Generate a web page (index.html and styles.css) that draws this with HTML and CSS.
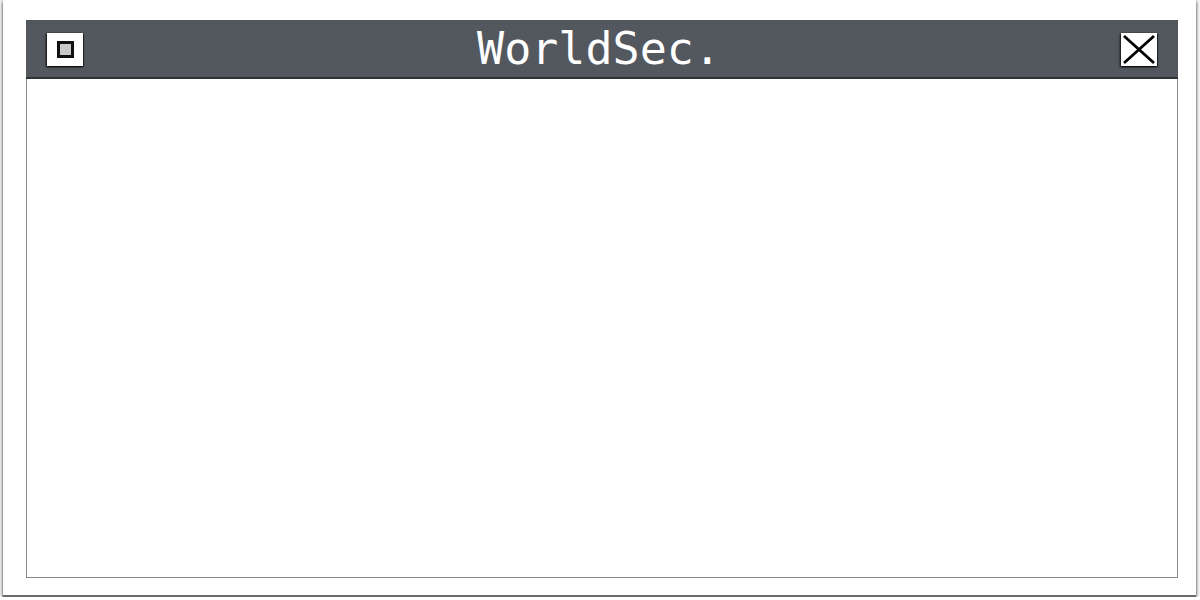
FILE: index.html
```html
<!DOCTYPE html>
<html>
<head>
<meta charset="utf-8">
<link rel="stylesheet" href="styles.css">
</head>
<body>
<div class="frame">
  <div class="window">
    <div class="titlebar">
      <div class="btn btn-min"><span class="inner"></span></div>
      <div class="title">WorldSec.</div>
      <div class="btn btn-close">
        <svg width="36" height="33" viewBox="0 0 36 33"><path d="M3 3 L33 30 M33 3 L3 30" stroke="#000" stroke-width="2.8" fill="none"/></svg>
      </div>
    </div>
    <div class="content"></div>
  </div>
</div>
</body>
</html>
```
FILE: styles.css
```css
html, body { margin: 0; padding: 0; background: #fff; }
.frame {
  box-sizing: border-box;
  width: 1193px;
  height: 597px;
  margin-left: 3px;
  padding: 20px 0 0 23px;
  border-bottom: 2px solid #6a6a6a;
  box-shadow: -2px 0 3px rgba(0,0,0,0.25), 2px 0 3px rgba(0,0,0,0.25), 0 3px 2px rgba(0,0,0,0.6);
  background: #fff;
}
.window {
  box-sizing: border-box;
  width: 1152px;
  height: 558px;
  border: 1px solid #8a8a8a;
  display: flex;
  flex-direction: column;
  background: #fff;
}
.titlebar {
  box-sizing: border-box;
  height: 59px;
  background: #53585f;
  border-bottom: 2px solid #2f3338;
  display: flex;
  align-items: center;
  justify-content: space-between;
  padding: 0 21px 0 21px;
  margin: -1px -1px 0 -1px;
}
.btn {
  width: 36px;
  height: 33px;
  background: #fff;
  box-shadow: -1px 1px 2px rgba(0,0,0,0.85), 1px 1px 1px rgba(0,0,0,0.5), 0 0 1px rgba(0,0,0,0.7);
  display: flex;
  align-items: center;
  justify-content: center;
  margin-top: 1px;
}
.btn svg { display: block; }
.btn-min .inner {
  box-sizing: border-box;
  width: 17px;
  height: 17px;
  border: 3px solid #111;
  background: #c9c9c9;
}
.title {
  font-family: "DejaVu Sans Mono", monospace;
  font-size: 45px;
  color: #fff;
  line-height: 1;
  margin-left: -6px;
}
.content { flex: 1; }
```
